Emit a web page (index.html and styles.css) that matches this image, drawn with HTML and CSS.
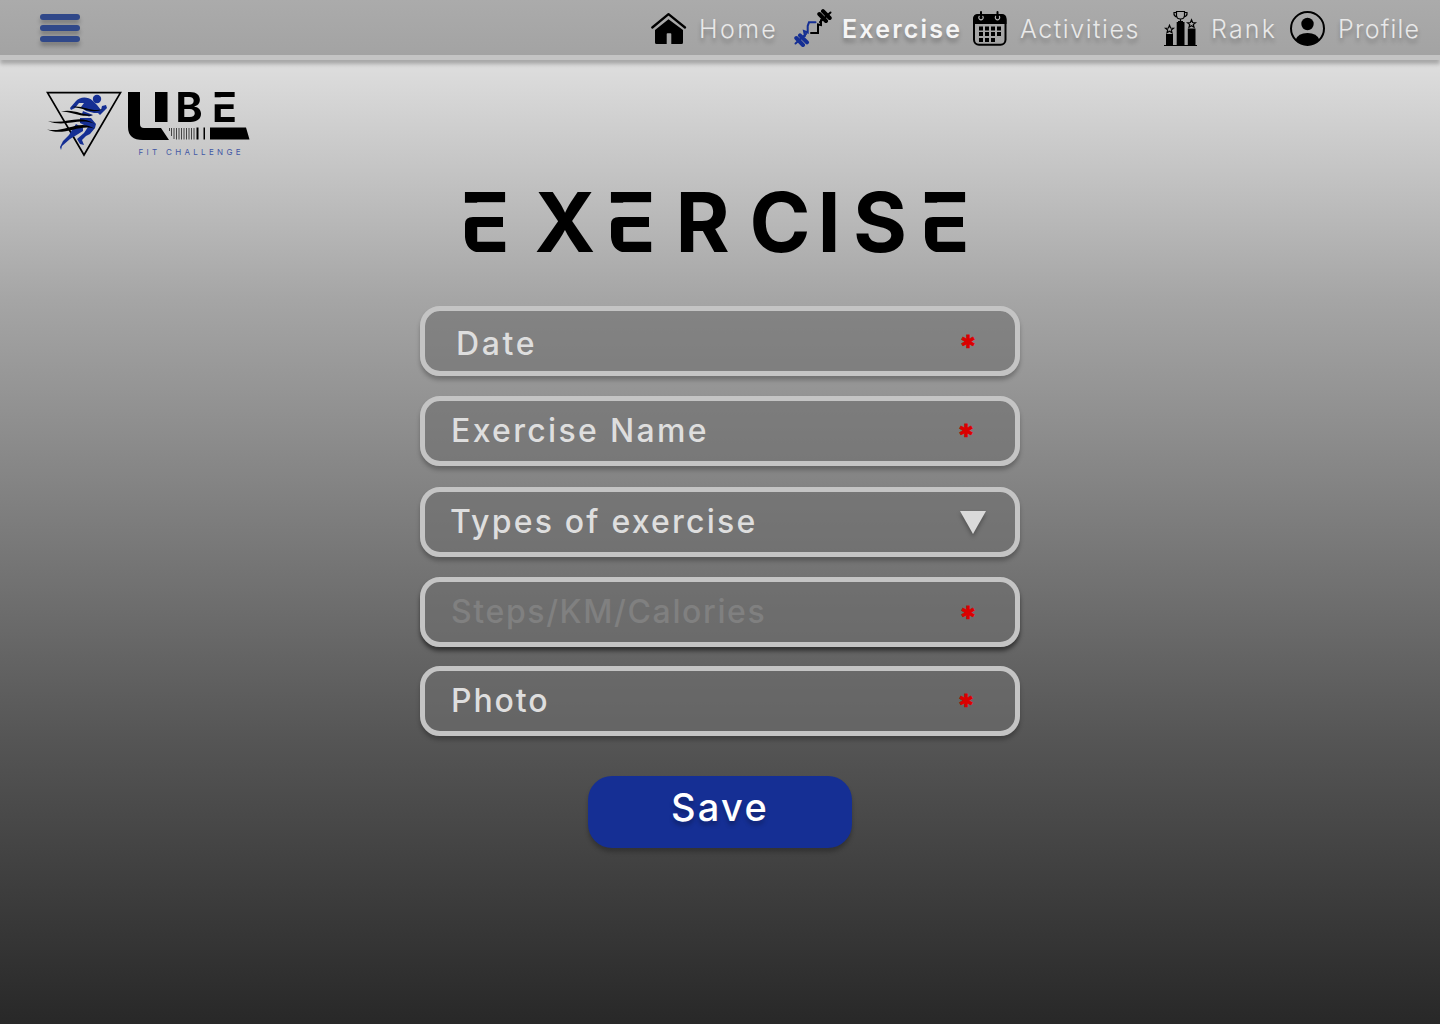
FILE: index.html
```html
<!DOCTYPE html>
<html lang="en">
<head>
<meta charset="utf-8">
<title>Exercise</title>
<link rel="stylesheet" href="styles.css">
</head>
<body>
<header class="topbar">
  <button class="burger" aria-label="Menu"><span></span><span></span><span></span></button>
  <nav class="nav">
    <a class="nav-item">
      <svg class="icon" viewBox="0 0 38 38"><path d="M4 21 17.500 10.200 32 21V33.500Q32 35 30.500 35H20.300V25Q20.300 24.300 19.500 24.300H16.500Q15.700 24.300 15.700 25V35H5.500Q4 35 4 33.500Z"/><path d="M1.300 18.500 17.500 5.200 34 18.500" fill="none" stroke="#000" stroke-width="2.300" stroke-linecap="round" stroke-linejoin="round"/></svg>
      <span class="label home">Home</span></a>
    <a class="nav-item active">
      <svg class="icon" viewBox="0 0 38 38"><g fill="none" stroke-width="2" stroke-linecap="round"><path d="M11 27 10 22 13.700 23.500V17L15 13.300H21.500M1.500 34.500 12 25" stroke="#152f94"/><path d="M27 11V16L24 15.500 24 24H17M26 13 36.500 3.500" stroke="#000"/><path stroke="#152f94" stroke-width="4" d="M2.300 29 9 36M6 26.300 13 33.300"/><path stroke="#000" stroke-width="4" d="M25.300 5 32 12M29 2.200 35.700 9"/></g></svg>
      <span class="label exercise">Exercise</span></a>
    <a class="nav-item">
      <svg class="icon" viewBox="0 0 38 38"><rect x="1" y="6" width="31.500" height="29.800" rx="5" fill="none" stroke="#000" stroke-width="2"/><path d="M0 15V10Q0 5 5 5H28.500Q33.500 5 33.500 10V15Z"/><g fill="none" stroke="#b5b5b5" stroke-width="1.200"><path d="M6.500 7A2.200 2.200 0 1 0 9.500 7M23 7A2.200 2.200 0 1 0 26 7"/></g><path d="M8 3V8M24.500 3V8" stroke="#000" stroke-width="2" stroke-linecap="round"/><path d="M6 17.500h4v4H6zM12 17.500h4v4h-4zM18 17.500h4v4h-4zM24 17.500h4v4h-4zM6 23h4v4H6zM12 23h4v4h-4zM18 23h4v4h-4zM24 23h4v4h-4zM6 29h4v4H6zM12 29h4v4h-4zM18 29h4v4h-4z"/></svg>
      <span class="label activities">Activities</span></a>
    <a class="nav-item">
      <svg class="icon" viewBox="0 0 38 38"><path d="M0 36H33V37H0zM2 25h7v11.500H2zM12.700 13h7.800v23.500h-7.800zM23.800 19.500h7.700v17h-7.700z"/><g fill="none" stroke="#000" stroke-width="1.200"><path d="M12.500 2.500H20.500V7Q20 10 16.500 10T12.500 7ZM12.500 3.500H10Q9.500 7.500 13.500 8M20.500 3.500H23Q23.500 7.500 19.500 8M16.500 10V13M14 12.500H19"/><path id="star" d="M5.500 16.300 6.600 19 9.500 19.200 7.300 21 8 23.800 5.500 22.300 3 23.800 3.700 21 1.500 19.200 4.400 19Z"/><use href="#star" x="22" y="-5.500"/></g></svg>
      <span class="label rank">Rank</span></a>
    <a class="nav-item">
      <svg class="icon" viewBox="0 0 38 38"><circle cx="17.500" cy="19.500" r="16.500" fill="none" stroke="#000" stroke-width="2"/><circle cx="17.500" cy="15" r="6.200"/><path d="M5.500 31Q8 24 17.500 24T29.500 31Q25 36 17.500 36T5.500 31Z"/></svg>
      <span class="label profile">Profile</span></a>
  </nav>
</header>
<main class="page">
  <svg class="logo" viewBox="0 0 204 67">
    <mask id="logo-cut" maskUnits="userSpaceOnUse" x="0" y="-20" width="204" height="90"><rect y="-20" width="204" height="90" fill="#fff"/><rect x="166" y="7.300" width="28" height="7" fill="#000"/></mask>
    <path d="M1.500 2.700H74.500L38 65Z" fill="none" stroke="#000" stroke-width="1.700"/>
    <g class="runner">
      <circle cx="51" cy="9" r="4.200"/>
      <path d="M47 11C41 6 34 7 30 11L24 18 25 20 29 18 33 13 38 13 35 17 40 21 48 23 52 23 54 25 58 21 61 18 60 15 56 16 55 20 51 15Z"/>
      <path d="M37 21 47 25 43 26.500 36 24ZM34 28 45 28 50 34 49 38 44 44 40 46 36 50 38 55 34 54 31 49 38 43 42 37 34 33Z"/>
      <path d="M30 34 37 38 37 41 29 46 24 49 16 56 15 60 14 57 17 51 23 45 26 40Z"/>
    </g>
    <g class="wind"><path d="M25 17C36 14 46 23 57 19 46 25 36 17 25 17ZM15 21.500C27 18.500 36 25 47 25 36 28 27 22 15 21.500ZM2 31C20 35 32 23 49 34 33 27 19 38 2 31ZM1 39.500C20 43 34 28 49 39 35 33 18 47 1 39.500Z"/></g>
    <path d="M82 2H94V34Q94 38 98 38H115L123 50H97Q82 50 82 37ZM109 2H121.500V32H109ZM164 37.500H200L203.500 49.500H164Z"/>
    <path d="M123.500 38V41M125.500 38V46M128 38V49M130.500 38V49.500M133 38V49.500M135.500 38V49.500M138 38V49.500M140.500 38V49.500M143 38V49.500M145.500 38V49.500M148 38V49.500" stroke="#444"/>
    <path d="M150.500 37.500h2v12h-2zM157.500 37.500h1.500v12h-1.500z"/>
    <text class="wordmark" mask="url(#logo-cut)" x="129.500 166" y="32">BE</text>
    <text class="tagline" x="92.500" y="65" textLength="102">FIT CHALLENGE</text>
  </svg>
  <svg class="title" viewBox="0 -20 520 110" role="heading" aria-level="1">
    <mask id="title-cut" maskUnits="userSpaceOnUse" x="0" y="-20" width="520" height="110">
      <rect y="-20" width="520" height="110" fill="#fff"/>
      <path id="cut" d="M0 15.800H57V30H13Q5 30 5 37V50Q6 64 20 66H0Z"/>
      <use href="#cut" x="146"/><use href="#cut" x="460"/>
    </mask>
    <text mask="url(#title-cut)" y="65" x="-.5 74.500 145.500 215.500 289.500 357.500 393 459.500">EXERCISE</text>
  </svg>
  <form class="form">
    <div class="field date"><span class="t-date">Date</span><b class="req">✱</b></div>
    <div class="field name"><span class="t-name">Exercise Name</span><b class="req left">✱</b></div>
    <div class="field types"><span class="t-types">Types of exercise</span><svg class="arrow" viewBox="0 0 26 24"><path d="M0 0H26L13 23Z"/></svg></div>
    <div class="field steps"><span class="t-steps">Steps/KM/Calories</span><b class="req">✱</b></div>
    <div class="field photo"><span class="t-photo">Photo</span><b class="req left">✱</b></div>
    <button type="button" class="save">Save</button>
  </form>
</main>
</body>
</html>
```
FILE: styles.css
```css
* { box-sizing: border-box; }
body {
  margin: 0;
  height: 1024px;
  overflow: hidden;
  font-family: Inter, "Liberation Sans", sans-serif;
  background: linear-gradient(#ececec 0, #dddddd 66px, #a5a5a5 300px, #555555 740px, #282828 1024px);
}
.topbar {
  display: flex;
  justify-content: space-between;
  height: 60px;
  border-bottom: 5px solid #c4c4c4;
  background: linear-gradient(#ababab, #a3a3a3);
  box-shadow: 0 4px 4px rgba(0,0,0,.25);
}
.burger {
  display: flex;
  flex-direction: column;
  gap: 5px;
  margin: 14px 0 0 40px;
  padding: 0;
  border: 0;
  background: none;
}
.burger span {
  width: 40px;
  height: 6px;
  border-radius: 3px;
  background: #304889;
  box-shadow: 0 4px 4px rgba(0,0,0,.25);
}
.nav {
  display: grid;
  grid-template-columns: 143px 179px 191px 126px 150px;
}
.nav-item { display: flex; align-items: flex-start; }
.icon { width: 38px; height: 38px; margin: 9px 10px 0 0; flex: none; }
.label {
  font-size: 25px;
  line-height: 30px;
  margin-top: 14px;
  font-weight: 300;
  color: #e9e9e9;
  white-space: nowrap;
  text-shadow: 0 4px 4px rgba(0,0,0,.25);
}
.active .label { font-weight: 600; color: #f5f5f5; }
.home { letter-spacing: 2.4px; }
.exercise { letter-spacing: 2.2px; }
.activities { margin-left: -1px; letter-spacing: 1.55px; }
.rank { margin-left: -1px; letter-spacing: 2.2px; }
.profile { letter-spacing: 1.2px; }
.page { display: flex; flex-direction: column; align-items: center; }
.logo { align-self: flex-start; width: 204px; height: 67px; margin: 30px 0 0 46px; overflow: visible; }
.runner { fill: #152f94; }
.wordmark { font-size: 41px; font-weight: 700; }
.tagline { font-size: 8px; fill: #4257a5; }
.title { width: 520px; height: 110px; margin-top: 10px; font-size: 82.5px; font-weight: 700; overflow: visible; }
.form { display: flex; flex-direction: column; align-items: center; padding-top: 29px; }
.field {
  display: flex;
  align-items: center;
  justify-content: space-between;
  width: 600px;
  height: 70px;
  margin-bottom: 20px;
  padding: 0 37px 1px 26px;
  border: 5px solid #c4c4c4;
  border-radius: 20px;
  background: rgba(110,110,110,.6);
  background-clip: padding-box;
  box-shadow: 0 4px 4px rgba(0,0,0,.25);
  color: #dedede;
  font-size: 32px;
  font-weight: 500;
  white-space: nowrap;
}
.date { padding-left: 31px; }
.date span { padding-top: 6px; }
.name { margin-bottom: 21px; }
.types { padding: 1px 29px 0 26px; }
.types span { padding-bottom: 2px; }
.steps { margin-bottom: 19px; box-shadow: 0 4px 4px rgba(0,0,0,.5); }
.steps span { color: #808080; }
.t-date { letter-spacing: 2.6px; }
.t-name { letter-spacing: 2.33px; }
.t-types { margin-left: -1px; letter-spacing: 2.2px; }
.t-steps { letter-spacing: 1.62px; }
.t-photo { letter-spacing: 1.9px; }
.req { width: 20px; padding-top: 1px; text-align: center; color: #db0000; -webkit-text-stroke: .6px #db0000; font: bold 18px/20px "DejaVu Sans", sans-serif; }
.date .req, .steps .req { padding-top: 3px; }
.left { margin-right: 2px; }
.arrow { width: 26px; height: 24px; fill: #dadada; filter: drop-shadow(0 3px 2px rgba(0,0,0,.3)); }
.save {
  width: 264px;
  height: 72px;
  margin-top: 20px;
  padding: 0 0 11px;
  border: 0;
  border-radius: 24px;
  background: #152f94;
  box-shadow: 0 4px 4px rgba(0,0,0,.25);
  color: #fff;
  font: 500 38px Inter, sans-serif;
  letter-spacing: 2.3px;
  text-shadow: 0 4px 4px rgba(0,0,0,.25);
}
```
